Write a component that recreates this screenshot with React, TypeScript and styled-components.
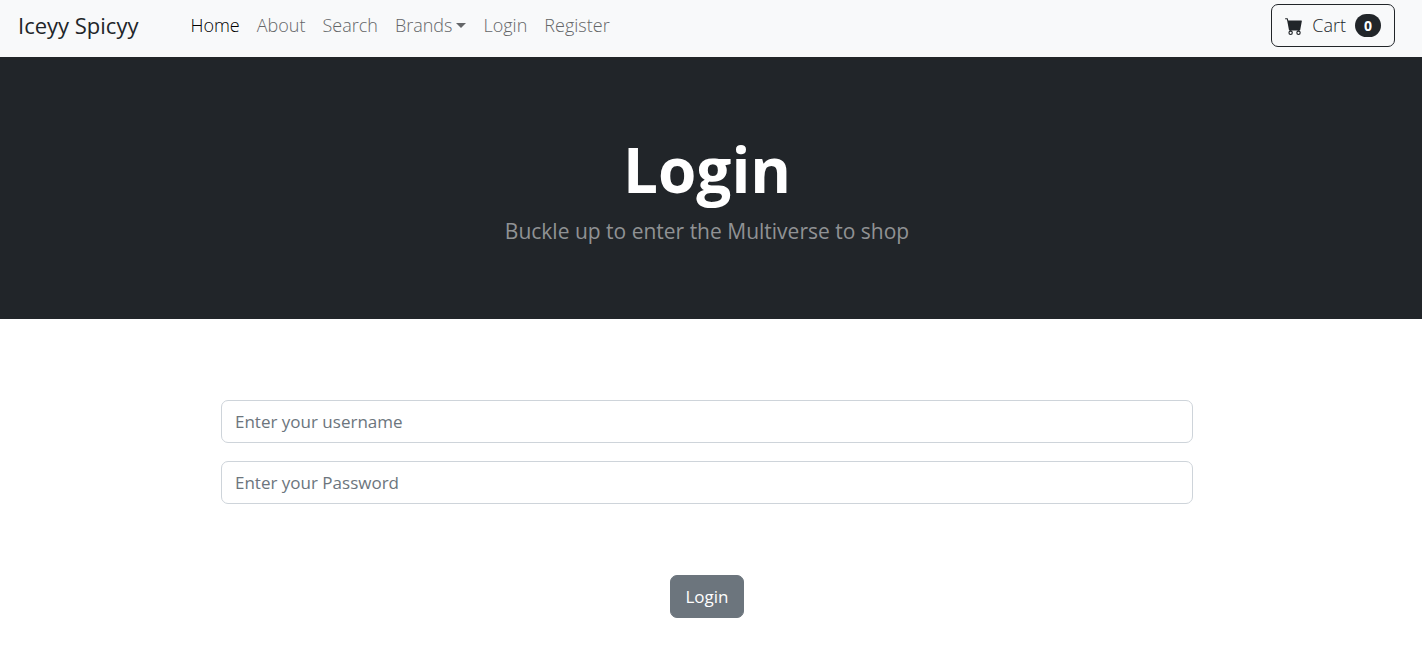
import React from "react";
import styled, { createGlobalStyle } from "styled-components";
import { BsCartFill } from "react-icons/bs";

const GlobalStyle = createGlobalStyle`
  *, *::before, *::after { box-sizing: border-box; }
  body {
    margin: 0;
    background: #fff;
    color: #212529;
    font-family: "Segoe UI", "Open Sans", "Noto Sans", sans-serif;
    font-size: 17px;
    line-height: 27px;
  }
  button, input { font: inherit; }
`;

const Navbar = styled.nav`
  display: flex;
  align-items: center;
  padding: 4px 27px 10px 18px;
  background: #f8f9fa;
`;

const Brand = styled.a`
  margin-right: 52px;
  color: #212529;
  font-size: 22px;
  text-decoration: none;
  white-space: nowrap;
`;

const NavList = styled.ul`
  display: flex;
  gap: 17px;
  margin: 0;
  padding: 0;
  list-style: none;
`;

const NavLink = styled.a<{ $active?: boolean }>`
  display: flex;
  align-items: center;
  gap: 4px;
  color: ${(p) => (p.$active ? "#000" : "#646668")};
  font-size: 18px;
  font-weight: 300;
  text-decoration: none;
`;

const Caret = styled.span`
  border-top: 5px solid currentColor;
  border-left: 5px solid transparent;
  border-right: 5px solid transparent;
`;

const CartButton = styled.button`
  display: flex;
  align-items: center;
  gap: 9px;
  height: 43px;
  margin-left: auto;
  padding: 0 13px;
  border: 1px solid #212529;
  border-radius: 7px;
  background: transparent;
  color: #212529;
  font-size: 18px;
  font-weight: 300;
`;

const Badge = styled.span`
  padding: 0 9px;
  border-radius: 12px;
  background: #212529;
  color: #fff;
  font-size: 14px;
  font-weight: 700;
  line-height: 23px;
`;

const Hero = styled.header`
  padding: 75px 8px 71px 0;
  background: #212529;
  text-align: center;
`;

const Title = styled.h1`
  margin: 0 0 7px;
  color: #fff;
  font-size: 62px;
  font-weight: 700;
  line-height: 75px;
`;

const Subtitle = styled.p`
  margin: 0;
  color: #909294;
  font-size: 21px;
  line-height: 34px;
`;

const Main = styled.main`
  padding: 81px 8px 30px 0;
`;

const Form = styled.form`
  display: flex;
  flex-direction: column;
  gap: 18px;
  width: 100%;
  max-width: 972px;
  margin: 0 auto;
`;

const Field = styled.input`
  width: 100%;
  height: 43px;
  padding: 0 13px;
  border: 1px solid #ced4da;
  border-radius: 7px;
  background: #fff;
  color: #212529;
  &::placeholder { color: #6c757d; opacity: 1; }
`;

const SubmitButton = styled.button`
  align-self: center;
  height: 43px;
  margin-top: 53px;
  padding: 0 14px;
  border: 1px solid #6c757d;
  border-radius: 7px;
  background: #6c757d;
  color: #fff;
`;

const links = [
  { label: "Home", active: true },
  { label: "About" },
  { label: "Search" },
  { label: "Brands", menu: true },
  { label: "Login" },
  { label: "Register" },
];

export default function App() {
  return (
    <>
      <GlobalStyle />
      <Navbar>
        <Brand href="#">Iceyy Spicyy</Brand>
        <NavList>
          {links.map((link) => (
            <li key={link.label}>
              <NavLink href="#" $active={link.active}>
                {link.label}
                {link.menu && <Caret />}
              </NavLink>
            </li>
          ))}
        </NavList>
        <CartButton type="button">
          <BsCartFill size={18} aria-hidden="true" />
          Cart
          <Badge>0</Badge>
        </CartButton>
      </Navbar>
      <Hero>
        <Title>Login</Title>
        <Subtitle>Buckle up to enter the Multiverse to shop</Subtitle>
      </Hero>
      <Main>
        <Form onSubmit={(e) => e.preventDefault()}>
          <Field type="text" aria-label="Username" placeholder="Enter your username" />
          <Field type="password" aria-label="Password" placeholder="Enter your Password" />
          <SubmitButton type="submit">Login</SubmitButton>
        </Form>
      </Main>
    </>
  );
}
